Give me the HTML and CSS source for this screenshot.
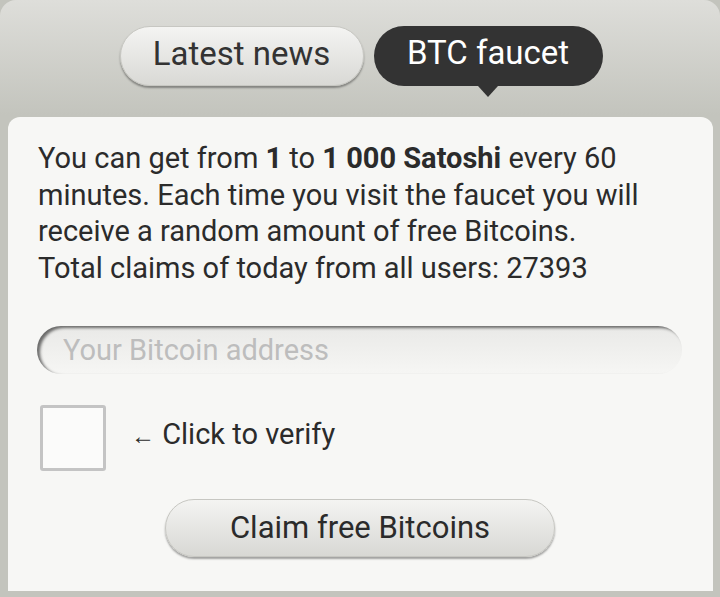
FILE: index.html
```html
<!DOCTYPE html>
<html lang="en">
<head>
  <meta charset="UTF-8">
  <title>BTC faucet</title>
  <link rel="stylesheet" href="styles.css">
</head>
<body>
  <div class="wrap">
    <div class="tabs">
      <a class="tab">Latest news</a>
      <a class="tab active">BTC faucet</a>
    </div>

    <div class="panel">
      <p class="info">
        You can get from <b>1</b> to <b>1 000 Satoshi</b> every 60 minutes. Each time you visit the faucet you will receive a random amount of free Bitcoins.<br>
        Total claims of today from all users: 27393
      </p>

      <input type="text" class="address" placeholder="Your Bitcoin address">

      <div class="verify">
        <span class="box"></span>
        <span class="hint"><span class="arrow">&larr;</span> Click to verify</span>
      </div>

      <div class="actions">
        <button class="claim">Claim free Bitcoins</button>
      </div>
    </div>
  </div>
</body>
</html>
```

FILE: styles.css
```css
body {
  margin: 0;
  background-color: #c3c4bd;
  font-family: Roboto, "Noto Sans", sans-serif;
  color: #2b2b2b;
}

.wrap {
  background: linear-gradient(#dededa, #c3c4bd 115px);
  border-radius: 16px 16px 0 0;
  padding: 26px 7px 5px 8px;
}

.tabs {
  display: flex;
  justify-content: center;
  gap: 10px;
  margin-bottom: 31px;
  padding-left: 1px;
}

.tab {
  position: relative;
  display: block;
  height: 60px;
  line-height: 54px;
  border-radius: 30px;
  font-size: 33px;
  text-align: center;
  box-sizing: border-box;
}

.tab:first-child {
  width: 244px;
  color: #333;
  background: linear-gradient(#f4f4f2, #d9d9d5);
  border: 1px solid #c7c7c2;
  box-shadow: 0 2px 2px rgba(0, 0, 0, 0.35);
}

.tab.active {
  width: 229px;
  color: #fff;
  background-color: #333333;
}

/* little arrow under the active tab */
.tab.active:after {
  content: "";
  position: absolute;
  left: 50%;
  bottom: -11px;
  margin-left: -10px;
  border-left: 10px solid transparent;
  border-right: 10px solid transparent;
  border-top: 11px solid #333;
}

.panel {
  background-color: #f7f7f5;
  border-radius: 12px 12px 0 0;
  padding: 23px 30px 34px 30px;
}

.info {
  margin: 0;
  font-size: 29px;
  line-height: 36.7px;
}

.info b {
  font-weight: bold;
}

.address {
  display: block;
  width: 100%;
  height: 48px;
  margin: 39px 0 0 -1px;
  box-sizing: border-box;
  border: none;
  border-radius: 24px;
  padding: 0 26px;
  font-family: Roboto, "Noto Sans", sans-serif;
  font-size: 29px;
  background: linear-gradient(#e9e9e7, #f6f6f4);
  box-shadow: inset 3px 2px 3px rgba(0, 0, 0, 0.55);
}

.address::placeholder {
  color: #bdbdbd;
}

.verify {
  display: flex;
  align-items: center;
  gap: 25px;
  margin-top: 31px;
  padding-left: 2px;
}

.box {
  display: block;
  width: 66px;
  height: 66px;
  box-sizing: border-box;
  border: 3px solid #c4c4c4;
  border-radius: 3px;
  background: #fbfbfa;
}

.hint {
  font-size: 29px;
  margin-top: -8px;
}

.arrow {
  font-size: 24px;
}

.actions {
  text-align: center;
  margin-top: 28px;
  padding-right: 1px;
}

.claim {
  width: 390px;
  height: 58px;
  border-radius: 29px;
  border: 1px solid #c7c7c2;
  background: linear-gradient(#f4f4f2, #d8d8d4);
  box-shadow: 0 2px 2px rgba(0, 0, 0, 0.35);
  font-family: Roboto, "Noto Sans", sans-serif;
  font-size: 31px;
  color: #2b2b2b;
}
```
